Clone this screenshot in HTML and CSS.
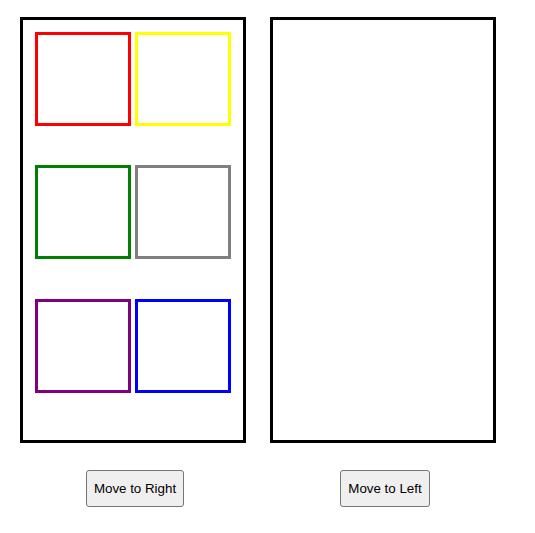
FILE: index.html
```html
<!DOCTYPE html>
<html>
<head>
<meta charset="utf-8">
<link rel="stylesheet" href="styles.css">
</head>
<body>
<div class="columns">
  <div class="column">
    <div class="container">
      <div class="box red"></div>
      <div class="box yellow"></div>
      <div class="box green"></div>
      <div class="box gray"></div>
      <div class="box purple"></div>
      <div class="box blue"></div>
    </div>
    <button class="move">Move to Right</button>
  </div>
  <div class="column">
    <div class="container"></div>
    <button class="move">Move to Left</button>
  </div>
</div>
</body>
</html>
```

FILE: styles.css
```css
html, body {
  background: #ffffff;
}
body {
  margin: 8px;
  font-family: "Liberation Sans", Arial, sans-serif;
}
.columns {
  display: flex;
}
.column {
  width: 250px;
  display: flex;
  flex-direction: column;
  align-items: center;
}
.container {
  box-sizing: content-box;
  width: 200px;
  height: 400px;
  padding: 10px;
  border: 3px solid #000;
  margin-top: 9px;
  display: flex;
  flex-wrap: wrap;
  justify-content: space-around;
  align-content: stretch;
}
.box {
  width: 90px;
  height: 88px;
  border: 3px solid;
  margin: 2px 0;
}
.red { border-color: #ff0000; }
.yellow { border-color: #ffff00; }
.green { border-color: #008000; }
.gray { border-color: #808080; }
.purple { border-color: #800080; }
.blue { border-color: #0000ff; }
.move {
  margin-top: 27px;
  margin-left: 4px;
  font-family: "Liberation Sans", Arial, sans-serif;
  font-size: 13.33px;
  line-height: 15px;
  color: #000;
  background: #efefef;
  border: 1px solid #767676;
  border-radius: 3px;
  padding: 10px 7px;
}
```
